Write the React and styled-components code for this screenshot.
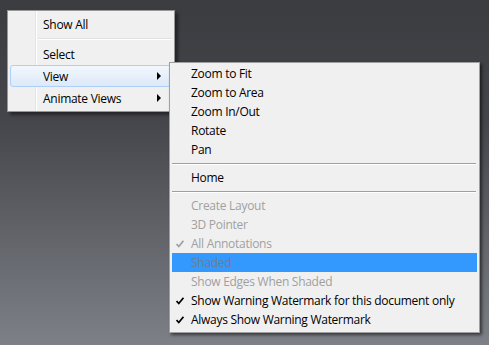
import React from 'react';
import styled, { createGlobalStyle } from 'styled-components';

const Global = createGlobalStyle`
  html, body { margin: 0; padding: 0; }
  body { font-family: "Open Sans", "Noto Sans", sans-serif; }
`;

const Desktop = styled.div`
  position: relative;
  width: 489px;
  height: 345px;
  overflow: hidden;
  background: linear-gradient(to bottom, #3b3c40 0%, #45464b 35%, #7d8087 100%);
`;

const ContextMenu = styled.div`
  position: absolute;
  left: 7px;
  top: 10px;
  width: 168px;
  box-sizing: border-box;
  border: 1px solid #979797;
  padding: 2px;
  background: linear-gradient(to right, #f0f0f0 27px, #e2e3e3 27px, #e2e3e3 28px, #ffffff 28px, #ffffff 29px, #f0f0f0 29px);
  box-shadow: 3px 3px 3px rgba(0, 0, 0, 0.45);
  display: flex;
  flex-direction: column;
`;

const VistaItem = styled.div`
  position: relative;
  height: 22px;
  box-sizing: border-box;
  display: flex;
  align-items: center;
  padding: 0 10px 0 32px;
  font-size: 12px;
  letter-spacing: -0.28px;
  color: #000;
  border: 1px solid ${p => (p.$hot ? '#aecff7' : 'transparent')};
  border-radius: 3px;
  background: ${p => (p.$hot ? 'linear-gradient(to bottom, #f2f7fe, #dde9f8)' : 'transparent')};
`;

const Label = styled.span`
  flex: 1;
  white-space: nowrap;
`;

const Arrow = styled.span`
  width: 0;
  height: 0;
  border-top: 4px solid transparent;
  border-bottom: 4px solid transparent;
  border-left: 4px solid #000;
`;

const VistaSeparator = styled.div`
  height: 8px;
  margin-left: 28px;
  display: flex;
  flex-direction: column;
  justify-content: center;
  &::before {
    content: '';
    height: 1px;
    background: #e0e0e0;
  }
  &::after {
    content: '';
    height: 1px;
    background: #ffffff;
  }
`;

const SubMenu = styled.div`
  position: absolute;
  left: 169px;
  top: 62px;
  width: 311px;
  box-sizing: border-box;
  border: 1px solid #a0a0a0;
  padding: 1px 2px 3px 2px;
  background: #f0f0f0;
  box-shadow: 2px 2px 3px rgba(0, 0, 0, 0.55);
  display: flex;
  flex-direction: column;
`;

const ClassicItem = styled.div`
  position: relative;
  height: 19px;
  display: flex;
  align-items: center;
  padding-left: 19px;
  font-size: 12px;
  letter-spacing: -0.28px;
  white-space: nowrap;
  background: ${p => (p.$hot ? '#3399ff' : 'transparent')};
  color: ${p => (p.$disabled ? (p.$hot ? '#687e96' : '#a0a0a0') : '#000')};
`;

const CheckMark = styled.svg`
  position: absolute;
  left: 4px;
  top: 6px;
`;

const ClassicSeparator = styled.div`
  height: 9px;
  display: flex;
  flex-direction: column;
  justify-content: center;
  padding: 0 1px 0 0;
  &::before {
    content: '';
    height: 1px;
    background: #a0a0a0;
  }
  &::after {
    content: '';
    height: 1px;
    background: #ffffff;
  }
`;

const Check = ({ color }) => (
  <CheckMark width="8" height="8" viewBox="0 0 8 8">
    <path d="M0.5 4 L2.8 6.5 L7.5 0.8" fill="none" stroke={color} strokeWidth="1.8" />
  </CheckMark>
);

const subItems = [
  { label: 'Zoom to Fit' },
  { label: 'Zoom to Area' },
  { label: 'Zoom In/Out' },
  { label: 'Rotate' },
  { label: 'Pan' },
  { sep: true },
  { label: 'Home' },
  { sep: true },
  { label: 'Create Layout', disabled: true },
  { label: '3D Pointer', disabled: true },
  { label: 'All Annotations', disabled: true, checked: true },
  { label: 'Shaded', disabled: true, hot: true },
  { label: 'Show Edges When Shaded', disabled: true },
  { label: 'Show Warning Watermark for this document only', checked: true },
  { label: 'Always Show Warning Watermark', checked: true },
];

export default function App() {
  return (
    <>
      <Global />
      <Desktop>
        <ContextMenu>
          <VistaItem><Label>Show All</Label></VistaItem>
          <VistaSeparator />
          <VistaItem><Label>Select</Label></VistaItem>
          <VistaItem $hot><Label>View</Label><Arrow /></VistaItem>
          <VistaItem><Label>Animate Views</Label><Arrow /></VistaItem>
        </ContextMenu>
        <SubMenu>
          {subItems.map((it, i) =>
            it.sep ? (
              <ClassicSeparator key={i} />
            ) : (
              <ClassicItem key={i} $disabled={it.disabled} $hot={it.hot}>
                {it.checked && <Check color={it.disabled ? '#a0a0a0' : '#000'} />}
                {it.label}
              </ClassicItem>
            )
          )}
        </SubMenu>
      </Desktop>
    </>
  );
}
